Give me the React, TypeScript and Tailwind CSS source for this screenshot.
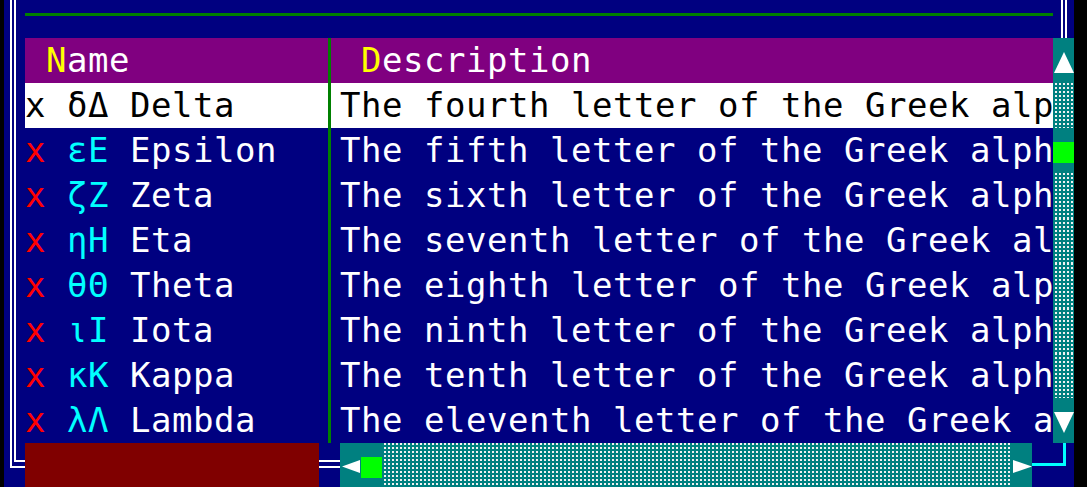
const mono = "font-['DejaVu_Sans_Mono','Liberation_Mono',monospace] text-[34px] tracking-[0.53px] leading-[45px] whitespace-pre";

// descriptions are cut by the window edge, as in the terminal
const rows = [
  { g: "δΔ", name: "Delta", desc: "The fourth letter of the Greek alp" },
  { g: "εΕ", name: "Epsilon", desc: "The fifth letter of the Greek alph" },
  { g: "ζΖ", name: "Zeta", desc: "The sixth letter of the Greek alph" },
  { g: "ηΗ", name: "Eta", desc: "The seventh letter of the Greek al" },
  { g: "θΘ", name: "Theta", desc: "The eighth letter of the Greek alp" },
  { g: "ιΙ", name: "Iota", desc: "The ninth letter of the Greek alph" },
  { g: "κΚ", name: "Kappa", desc: "The tenth letter of the Greek alph" },
  { g: "λΛ", name: "Lambda", desc: "The eleventh letter of the Greek a" },
];

const shade = "bg-[#008080] bg-[conic-gradient(#f2f2f2_25%,#008080_0)] bg-[length:4px_4px]";

// left double frame line (║)
function FrameLeft({ h }: { h: number }) {
  return (
    <svg width={21} height={h} className="block shrink-0 bg-[#000080]">
      <rect x={6} y={0} width={2} height={h} fill="#fff" />
      <rect x={10} y={0} width={2} height={h} fill="#fff" />
    </svg>
  );
}

function Divider({ bg }: { bg: string }) {
  return (
    <svg width={21} height={45} className={`block shrink-0 ${bg}`}>
      <rect x={9} y={0} width={3} height={45} fill="#008000" />
    </svg>
  );
}

function ScrollCell({ kind }: { kind: "up" | "down" | "thumb" | "shade" }) {
  if (kind === "shade") return <div className={`w-[21px] h-[45px] shrink-0 ${shade}`} />;
  return (
    <svg width={21} height={45} className="block shrink-0 bg-[#008080]">
      {kind === "up" && <polygon points="1,35 11,14 21,35" fill="#fff" />}
      {kind === "down" && <polygon points="1,14 21,14 11,35" fill="#fff" />}
      {kind === "thumb" && <rect x={0} y={14} width={21} height={21} fill="#00ff00" />}
    </svg>
  );
}

export default function App() {
  return (
    <div className="w-[1087px] h-[487px] bg-black overflow-hidden">
      {/* top frame row */}
      <div className="flex h-[38px]">
        <div className="w-[4px] shrink-0" />
        <FrameLeft h={38} />
        <div className="w-[1028px] shrink-0 bg-[#000080] pt-[13px]">
          <div className="h-[3px] bg-[#008000]" />
        </div>
        <svg width={21} height={38} className="block shrink-0 bg-[#000080]">
          <rect x={8} y={0} width={2} height={38} fill="#fff" />
          <rect x={12} y={0} width={2} height={38} fill="#fff" />
        </svg>
      </div>

      {/* header */}
      <div className="flex h-[45px]">
        <div className="w-[4px] shrink-0" />
        <FrameLeft h={45} />
        <div className={`w-[294px] shrink-0 bg-[#800080] text-white ${mono}`}>
          {" "}<span className="text-[#ffff00]">N</span>ame
        </div>
        <Divider bg="bg-[#800080]" />
        <div className={`w-[713px] shrink-0 bg-[#800080] text-white ${mono}`}>
          {" "}<span className="text-[#ffff00]">D</span>escription
        </div>
        <ScrollCell kind="up" />
      </div>

      {/* data rows */}
      {rows.map((r, i) => {
        const sel = i === 0;
        const bg = sel ? "bg-white" : "bg-[#000080]";
        const kind = i === 1 ? "thumb" : i === rows.length - 1 ? "down" : "shade";
        return (
          <div key={r.name} className="flex h-[45px]">
            <div className="w-[4px] shrink-0" />
            <FrameLeft h={45} />
            <div className={`w-[294px] shrink-0 ${bg} ${mono} ${sel ? "text-black" : "text-white"}`}>
              <span className={sel ? "" : "text-[#ff0000]"}>x</span>{" "}
              <span className={sel ? "" : "text-[#00ffff]"}>{r.g}</span>{" "}
              {r.name}
            </div>
            <Divider bg={bg} />
            <div className={`w-[713px] shrink-0 ${bg} ${mono} ${sel ? "text-black" : "text-white"}`}>
              {r.desc}
            </div>
            <ScrollCell kind={kind} />
          </div>
        );
      })}

      {/* bottom row */}
      <div className="flex h-[44px]">
        <div className="w-[4px] shrink-0" />
        <svg width={21} height={44} className="block shrink-0 bg-[#000080]">
          <rect x={6} y={0} width={2} height={25} fill="#fff" />
          <rect x={6} y={23} width={15} height={2} fill="#fff" />
          <rect x={10} y={0} width={2} height={19} fill="#fff" />
          <rect x={10} y={17} width={11} height={2} fill="#fff" />
        </svg>
        <div className="w-[294px] shrink-0 bg-[#800000]" />
        <svg width={21} height={44} className="block shrink-0 bg-[#000080]">
          <rect x={0} y={17} width={21} height={2} fill="#fff" />
          <rect x={0} y={23} width={21} height={2} fill="#fff" />
        </svg>
        {/* horizontal scrollbar */}
        <svg width={21} height={44} className="block shrink-0 bg-[#008080]">
          <polygon points="2,23.5 20,17 20,30" fill="#fff" />
        </svg>
        <svg width={21} height={44} className="block shrink-0 bg-[#008080]">
          <rect x={0} y={14} width={21} height={21} fill="#00ff00" />
        </svg>
        <div className={`w-[629px] h-[44px] shrink-0 ${shade}`} />
        <svg width={21} height={44} className="block shrink-0 bg-[#008080]">
          <polygon points="2,17 21,23.5 2,30" fill="#fff" />
        </svg>
        <svg width={42} height={44} className="block shrink-0 bg-[#000080]">
          <rect x={0} y={20} width={34} height={3} fill="#00ffff" />
          <rect x={31} y={0} width={3} height={23} fill="#00ffff" />
        </svg>
      </div>
    </div>
  );
}
